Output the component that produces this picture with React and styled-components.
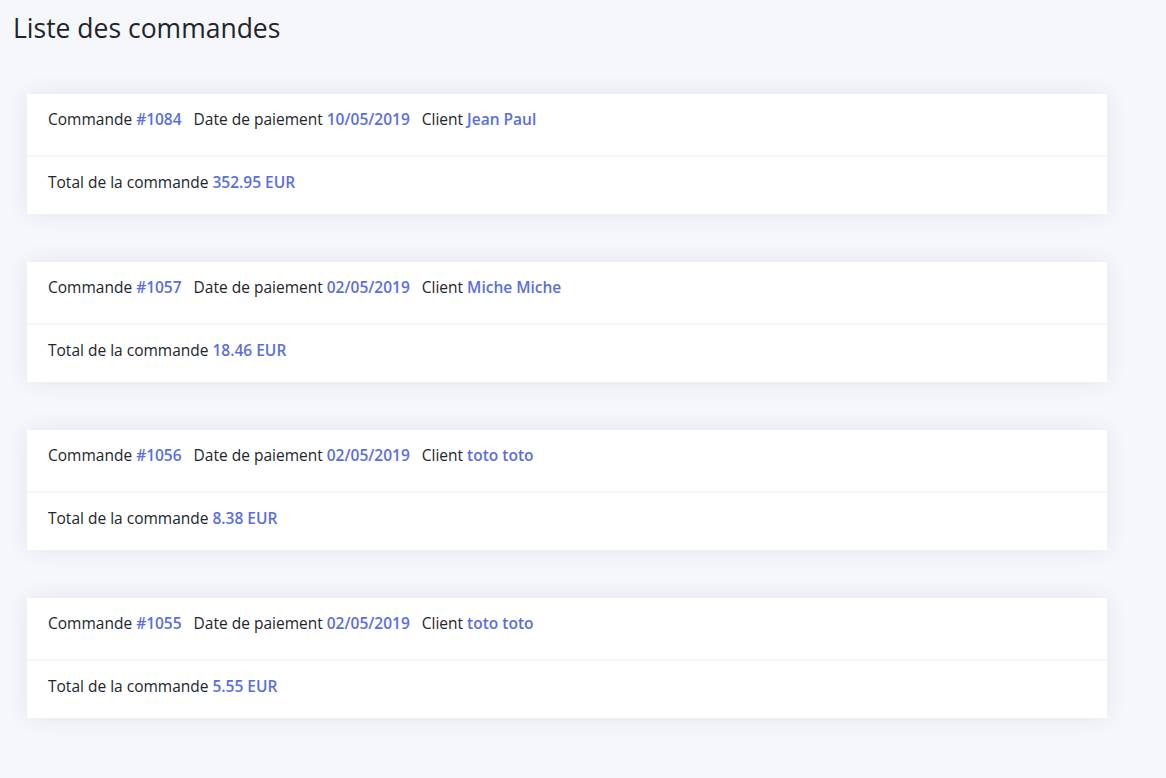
import React from 'react';
import styled, { createGlobalStyle } from 'styled-components';

const GlobalStyle = createGlobalStyle`
  html, body {
    margin: 0;
    padding: 0;
    background-color: #f6f7fb;
    font-family: "Open Sans", "Noto Sans", Arial, sans-serif;
    color: #212529;
  }
`;

const Page = styled.div`
  padding: 10px 0 40px 13px;
`;

const Title = styled.h1`
  margin: 0;
  font-size: 26.5px;
  font-weight: 400;
  line-height: 36px;
  color: #212529;
`;

const List = styled.div`
  display: flex;
  flex-direction: column;
  gap: 48px;
  margin: 48px 0 0 14px;
  width: 1080px;
`;

const Card = styled.div`
  background: #fff;
  box-shadow: 0 0 22px rgba(40, 50, 90, 0.09);
  display: flex;
  flex-direction: column;
`;

const Row = styled.div`
  display: flex;
  align-items: flex-start;
  gap: 12px;
  height: ${(p) => p.$height}px;
  box-sizing: border-box;
  padding: 14px 21px 0;
  font-size: 15.5px;
  line-height: 22px;
  & + & {
    border-top: 2px solid #f5f6fa;
  }
`;

const Field = styled.span`
  white-space: nowrap;
`;

const Value = styled.span`
  color: #5a6ee0;
  font-weight: 600;
`;

const orders = [
  { id: '1084', date: '10/05/2019', client: 'Jean Paul', total: '352.95' },
  { id: '1057', date: '02/05/2019', client: 'Miche Miche', total: '18.46' },
  { id: '1056', date: '02/05/2019', client: 'toto toto', total: '8.38' },
  { id: '1055', date: '02/05/2019', client: 'toto toto', total: '5.55' },
];

const App = () => {
  return (
    <Page>
      <GlobalStyle />
      <Title>Liste des commandes</Title>
      <List>
        {orders.map((o) => (
          <Card key={o.id}>
            <Row $height={61}>
              <Field>Commande <Value>#{o.id}</Value></Field>
              <Field>Date de paiement <Value>{o.date}</Value></Field>
              <Field>Client <Value>{o.client}</Value></Field>
            </Row>
            <Row $height={59}>
              <Field>Total de la commande <Value>{o.total} EUR</Value></Field>
            </Row>
          </Card>
        ))}
      </List>
    </Page>
  );
};

export default App;
